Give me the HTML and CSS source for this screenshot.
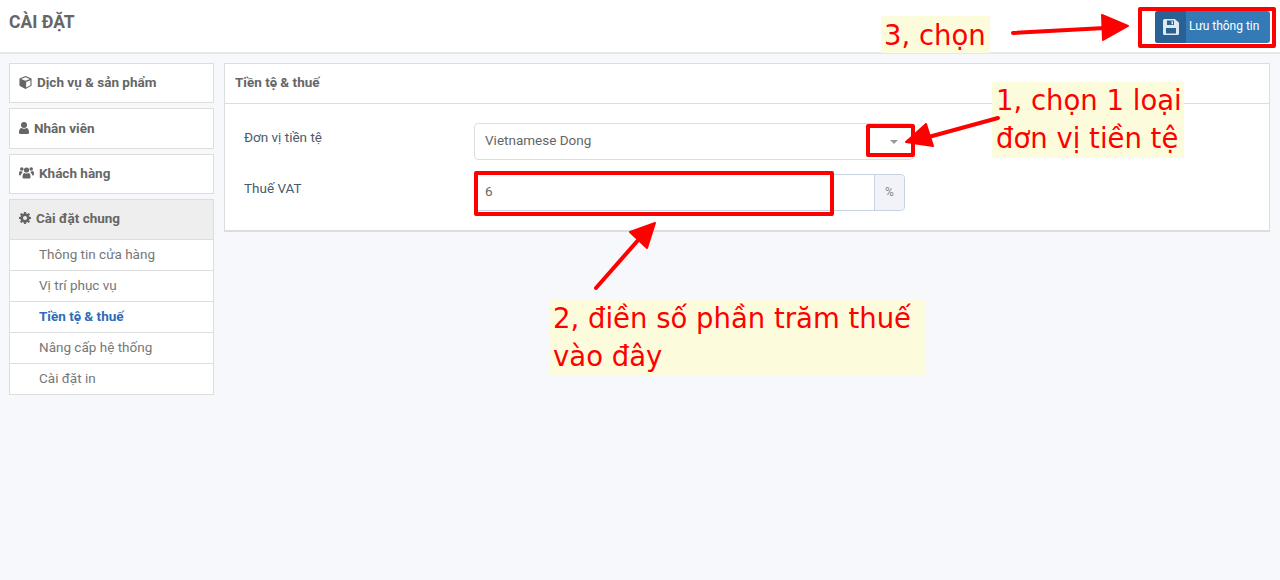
FILE: index.html
```html
<!DOCTYPE html>
<html>
<head>
  <meta charset="utf-8">
  <title>Cài đặt</title>
  <link rel="stylesheet" href="styles.css">
</head>
<body>
<header class="topbar">
  <h1>CÀI ĐẶT</h1>
  <button class="save-btn">
    <span class="save-icon">
      <svg width="16" height="16" viewBox="0 0 16 16"><path d="M1.500 0h10.300L16 3.700v10.800a1.500 1.500 0 0 1-1.500 1.500h-13A1.500 1.500 0 0 1 0 14.500v-13A1.500 1.500 0 0 1 1.500 0z" fill="#dfe9f3"/><path d="M4 1.500h7v4.500H4zM3 9h10v5.500H3z" fill="#2a6195"/><path d="M8.500 2.300h1.500v2.900H8.500z" fill="#dfe9f3"/></svg>
    </span>
    <span class="save-label">Lưu thông tin</span>
  </button>
</header>

<div class="page">
  <aside class="sidebar">
    <div class="side-box">
      <div class="side-title">
        <svg class="ico" width="13" height="13" viewBox="0 0 14 14"><path d="M7 0l6.500 2.700v7.800L7 14 .5 10.500V2.700z" fill="#666"/><path d="M7 1.300L2.300 3.200 7 5.200l4.700-2zM7.700 6.400v6l4.600-2.500V4.500z" fill="#fff"/></svg>
        Dịch vụ &amp; sản phẩm
      </div>
    </div>
    <div class="side-box">
      <div class="side-title">
        <svg class="ico" width="10" height="12" viewBox="0 0 10 12"><circle cx="5" cy="3" r="3" fill="#666"/><path d="M0 10.500C0 7.500 1 6 2.500 6c.7.500 1.500.8 2.500.8S6.800 6.500 7.500 6C9 6 10 7.500 10 10.500c0 1-.7 1.500-1.500 1.500h-7C.7 12 0 11.500 0 10.500z" fill="#666"/></svg>
        Nhân viên
      </div>
    </div>
    <div class="side-box">
      <div class="side-title">
        <svg class="ico" width="15" height="13" viewBox="0 0 15 12"><circle cx="7.500" cy="3.500" r="2.600" fill="#666"/><circle cx="2.800" cy="2.500" r="1.800" fill="#666"/><circle cx="12.200" cy="2.500" r="1.800" fill="#666"/><path d="M3.500 10.500c0-3 1-4 2-4 .5.400 1.200.6 2 .6s1.500-.2 2-.6c1 0 2 1 2 4 0 1-.6 1.500-1.400 1.500H4.900c-.8 0-1.400-.5-1.400-1.500z" fill="#666"/><path d="M0 7c0-1.500.5-2.500 1.500-2.500.4.400.9.600 1.500.6h.4c-.2.600-.1 1-.1 1.400-.9.400-1.500 1.300-1.700 2.500H1c-.6 0-1-.5-1-2zM15 7c0-1.500-.5-2.500-1.500-2.500-.4.400-.9.600-1.500.6h-.4c.2.600.1 1 .1 1.400.9.400 1.500 1.300 1.700 2.500h.6c.6 0 1-.5 1-2z" fill="#666"/></svg>
        Khách hàng
      </div>
    </div>
    <div class="side-box">
      <div class="side-title active">
        <svg class="ico" width="12" height="12" viewBox="0 0 12 12"><path fill-rule="evenodd" d="M5 0h2l.3 1.600 1 .4L9.700 1 11 2.300 10 3.700l.4 1L12 5v2l-1.600.3-.4 1 1 1.400L9.700 11l-1.400-1-1 .4L7 12H5l-.3-1.600-1-.4L2.300 11 1 9.700 2 8.300l-.4-1L0 7V5l1.600-.3.400-1L1 2.300 2.300 1l1.400 1 1-.4zM6 4a2 2 0 1 0 0 4 2 2 0 0 0 0-4z" fill="#666"/></svg>
        Cài đặt chung
      </div>
      <ul class="side-menu">
        <li>Thông tin cửa hàng</li>
        <li>Vị trí phục vụ</li>
        <li class="current">Tiền tệ &amp; thuế</li>
        <li>Nâng cấp hệ thống</li>
        <li>Cài đặt in</li>
      </ul>
    </div>
  </aside>

  <section class="panel">
    <div class="panel-head">Tiền tệ &amp; thuế</div>
    <div class="panel-body">
      <div class="form-row">
        <label>Đơn vị tiền tệ</label>
        <div class="select-box">
          <span>Vietnamese Dong</span>
          <i class="caret"></i>
        </div>
      </div>
      <div class="form-row">
        <label>Thuế VAT</label>
        <div class="input-group">
          <div class="input-box">6</div>
          <div class="addon">%</div>
        </div>
      </div>
    </div>
  </section>
</div>

<!-- red notes drawn on top of the screenshot -->
<div class="note note-1"><span class="note-text">1, chọn 1 loại<br>đơn vị tiền tệ</span></div>
<div class="note note-2"><span class="note-text">2, điền số phần trăm thuế<br>vào đây</span></div>
<div class="note note-3">3, chọn</div>
<div class="mark mark-select"></div>
<div class="mark mark-input"></div>
<div class="mark mark-save"></div>
<svg class="arrows" width="1280" height="580" viewBox="0 0 1280 580">
  <path d="M1013 33L1105 28" stroke="#f00" stroke-width="4" stroke-linecap="round"/>
  <path d="M1102 15L1128 26 1103 40z" fill="#f00" stroke="#f00" stroke-width="2" stroke-linejoin="round"/>
  <path d="M998 118L925 138" stroke="#f00" stroke-width="4" stroke-linecap="round"/>
  <path d="M926 124L906 142 933 146z" fill="#f00" stroke="#f00" stroke-width="2" stroke-linejoin="round"/>
  <path d="M596 288L640 238" stroke="#f00" stroke-width="4" stroke-linecap="round"/>
  <path d="M630 232L655 223 647 248z" fill="#f00" stroke="#f00" stroke-width="2" stroke-linejoin="round"/>
</svg>
</body>
</html>
```

FILE: styles.css
```css
* {
  box-sizing: border-box;
}

html, body {
  height: 100%;
}

body {
  margin: 0;
  background: #f7f8fc;
  font-family: Roboto, "Liberation Sans", sans-serif;
  font-size: 13.5px;
  color: #666;
  position: relative;
  overflow: hidden;
}

.topbar {
  height: 54px;
  padding: 11px 9px 0;
  background: #fff;
  border-bottom: 2px solid #e7e7e7;
  display: flex;
  justify-content: space-between;
  align-items: flex-start;
}

.topbar h1 {
  margin: 1px 0 0;
  font-size: 17.5px;
  line-height: 20px;
  font-weight: 700;
  color: #666;
}

.save-btn {
  width: 115px;
  height: 32px;
  margin-right: 1px;
  padding: 0 0 2px;
  border: 0;
  border-radius: 3px;
  background: #337ab7;
  color: #fff;
  font: 12px Roboto, sans-serif;
  display: flex;
  align-items: center;
  overflow: hidden;
  position: relative;
}

.save-icon {
  width: 31px;
  height: 32px;
  margin-bottom: -2px;
  background: #2a6195;
  display: flex;
  align-items: center;
  justify-content: center;
}

.save-label {
  padding-left: 3px;
  white-space: nowrap;
}

.page {
  display: flex;
  align-items: flex-start;
  gap: 10px;
  padding: 9px 10px 0 9px;
}

.sidebar {
  width: 205px;
  flex: none;
  display: flex;
  flex-direction: column;
  gap: 5px;
}

.side-box {
  background: #fff;
  border: 1px solid #ddd;
}

.side-title {
  height: 38.4px;
  padding: 0 9px 2px;
  display: flex;
  align-items: center;
  gap: 5px;
  font-weight: 700;
  color: #666;
}

.side-title.active {
  background: #eee;
}

.side-menu {
  list-style: none;
  margin: 0;
  padding: 0;
}

.side-menu li {
  height: 31px;
  line-height: 28px;
  padding-left: 29px;
  border-top: 1px solid #ddd;
  color: #777;
}

.side-menu li.current {
  color: #2e6cb8;
  font-weight: 700;
}

.panel {
  flex: 1;
  height: 169px;
  background: #fff;
  border: 1px solid #ddd;
  border-bottom-width: 2px;
}

.panel-head {
  height: 40px;
  line-height: 36px;
  padding-left: 10px;
  border-bottom: 1px solid #ddd;
  font-weight: 700;
  color: #666;
}

.panel-body {
  padding: 19px 0 0 19px;
}

.form-row {
  display: flex;
  height: 37px;
  margin-bottom: 14px;
}

.form-row label {
  width: 230px;
  padding-top: 6px;
  color: #4a5a6a;
}

.select-box {
  width: 440px;
  border: 1px solid #ddd;
  border-radius: 4px;
  padding: 0 10px 3px;
  display: flex;
  align-items: center;
  justify-content: space-between;
  color: #666;
}

.caret {
  width: 0;
  height: 0;
  margin: 3px 5px 0 0;
  border-left: 4px solid transparent;
  border-right: 4px solid transparent;
  border-top: 4px solid #999;
}

.input-group {
  display: flex;
  width: 431px;
  border: 1px solid #c5d3e3;
  border-radius: 4px;
}

.input-box {
  flex: 1;
  padding: 0 10px;
  line-height: 33px;
  color: #666;
}

.addon {
  width: 30px;
  background: #f1f3f9;
  border-left: 1px solid #c5d3e3;
  border-radius: 0 4px 4px 0;
  text-align: center;
  line-height: 34px;
  font-size: 12px;
  color: #888;
}

/* notes on top */
.note {
  position: absolute;
  background: #fcfcdc;
  color: #f00;
  font-family: "DejaVu Sans", sans-serif;
  white-space: nowrap;
}

.note-text {
  display: block;
  margin-top: -1px;
}

.note-1 {
  left: 992px;
  top: 82px;
  width: 192px;
  height: 76px;
  padding-left: 4px;
  font-size: 27.500px;
  line-height: 38px;
}

.note-2 {
  left: 550px;
  top: 300px;
  width: 376px;
  height: 76px;
  padding-left: 3px;
  font-size: 27.500px;
  line-height: 38px;
}

.note-3 {
  left: 881px;
  top: 16px;
  width: 109px;
  height: 37px;
  padding-left: 3px;
  font-size: 27.500px;
  line-height: 38px;
}

.mark {
  position: absolute;
  border: 4px solid #f00;
  border-radius: 2px;
}

.mark-select {
  left: 866px;
  top: 124px;
  width: 49px;
  height: 33px;
}

.mark-input {
  left: 474px;
  top: 171px;
  width: 360px;
  height: 45px;
}

.mark-save {
  left: 1138px;
  top: 7px;
  width: 138px;
  height: 41px;
}

.arrows {
  position: absolute;
  left: 0;
  top: 0;
}
```
